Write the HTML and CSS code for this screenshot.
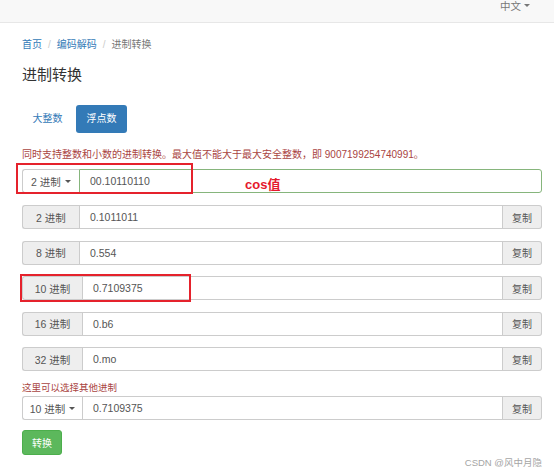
FILE: index.html
```html
<!DOCTYPE html>
<html lang="zh">
<head>
<meta charset="utf-8">
<title>进制转换</title>
<link rel="stylesheet" href="styles.css">
</head>
<body>
<div class="navbar">
  <span class="lang">中文<span class="caret"></span></span>
</div>
<div class="container">
  <div class="breadcrumb">
    <a href="#">首页</a><span class="sep">/</span><a href="#">编码解码</a><span class="sep">/</span><span class="active">进制转换</span>
  </div>
  <h3 class="title">进制转换</h3>
  <div class="pills">
    <a class="pill" href="#">大整数</a>
    <a class="pill active" href="#">浮点数</a>
  </div>
  <p class="help">同时支持整数和小数的进制转换。最大值不能大于最大安全整数，即 9007199254740991。</p>

  <div class="group first">
    <div class="dropdown w57">2 进制<span class="caret"></span></div>
    <div class="input success">00.10110110</div>
    <span class="mark mark1"></span>
    <span class="note">cos值</span>
  </div>

  <div class="rows">
    <div class="group">
      <div class="addon w57">2 进制</div>
      <div class="input">0.1011011</div>
      <div class="copy">复制</div>
    </div>
    <div class="group">
      <div class="addon w57">8 进制</div>
      <div class="input">0.554</div>
      <div class="copy">复制</div>
    </div>
    <div class="group">
      <div class="addon w60">10 进制</div>
      <div class="input">0.7109375</div>
      <div class="copy">复制</div>
      <span class="mark mark2"></span>
    </div>
    <div class="group">
      <div class="addon w60">16 进制</div>
      <div class="input">0.b6</div>
      <div class="copy">复制</div>
    </div>
    <div class="group">
      <div class="addon w60">32 进制</div>
      <div class="input">0.mo</div>
      <div class="copy">复制</div>
    </div>
  </div>

  <p class="help small">这里可以选择其他进制</p>
  <div class="group last">
    <div class="dropdown w60">10 进制<span class="caret"></span></div>
    <div class="input">0.7109375</div>
    <div class="copy">复制</div>
  </div>

  <button class="btn-success">转换</button>
</div>
<div class="watermark">CSDN @风中月隐</div>
</body>
</html>
```

FILE: styles.css
```css
* { box-sizing: border-box; }
html, body { margin: 0; padding: 0; }
body {
  width: 554px;
  height: 476px;
  position: relative;
  overflow: hidden;
  background: #fff;
  font-family: "Liberation Sans", "Noto Sans CJK SC", sans-serif;
  font-size: 10px;
  color: #333;
}
.navbar {
  height: 23px;
  background: #f8f8f8;
  border-bottom: 1px solid #e7e7e7;
  display: flex;
  justify-content: flex-end;
  align-items: center;
  padding-right: 24px;
  padding-bottom: 12px;
}
.lang { color: #777; font-size: 10.5px; display: flex; align-items: center; }
.caret {
  display: inline-block;
  width: 0; height: 0;
  border-left: 3px solid transparent;
  border-right: 3px solid transparent;
  border-top: 3.5px solid currentColor;
  margin-left: 3px;
}
.container {
  padding-left: 22px;
  width: 542px;
  display: flex;
  flex-direction: column;
}
.breadcrumb {
  margin-top: 15px;
  line-height: 14px;
  font-size: 10px;
  color: #777;
}
.breadcrumb a { color: #337ab7; text-decoration: none; }
.breadcrumb .sep { color: #ccc; padding: 0 6px; }
.title {
  margin: 14px 0 0;
  font-size: 15px;
  line-height: 18px;
  font-weight: 400;
  color: #333;
}
.pills {
  margin-top: 21px;
  display: flex;
  gap: 3px;
}
.pill {
  display: block;
  height: 28px;
  line-height: 28px;
  padding: 0 10.5px;
  font-size: 10px;
  color: #337ab7;
  text-decoration: none;
  border-radius: 3px;
}
.pill.active { background: #337ab7; color: #fff; }
.help {
  margin: 15px 0 0;
  line-height: 14px;
  font-size: 10px;
  color: #a94442;
}
.help.small { margin-top: 11px; font-size: 9.5px; line-height: 12px; }
.group {
  position: relative;
  display: flex;
  height: 24px;
  width: 520px;
  font-size: 10.5px;
  color: #555;
}
.group.first { margin-top: 7px; }
.group.last { margin-top: 2px; }
.rows {
  margin-top: 12px;
  display: flex;
  flex-direction: column;
  gap: 11.5px;
}
.addon, .dropdown {
  flex: none;
  display: flex;
  align-items: center;
  justify-content: center;
  border: 1px solid #ccc;
  border-right: 0;
  border-radius: 3px 0 0 3px;
  background: #eee;
}
.dropdown { background: #fff; }
.dropdown .caret { margin-left: 4px; color: #555; }
.w57 { width: 57px; }
.w60 { width: 60px; }
.input {
  flex: 1;
  display: flex;
  align-items: center;
  padding-left: 10px;
  border: 1px solid #ccc;
  color: #555;
}
.input.success { border-color: #86b57c; border-radius: 0 3px 3px 0; }
.copy {
  flex: none;
  width: 39px;
  display: flex;
  align-items: center;
  justify-content: center;
  background: #eee;
  border: 1px solid #ccc;
  border-left: 0;
  border-radius: 0 3px 3px 0;
  color: #555;
  font-size: 10px;
}
.mark {
  position: absolute;
  border: 2px solid #e5222c;
  pointer-events: none;
}
.mark1 { left: -6px; top: -6px; width: 177px; height: 31px; }
.mark2 { left: -2px; top: -2px; width: 171px; height: 28px; }
.note {
  position: absolute;
  left: 223px;
  top: 8px;
  font-size: 13px;
  font-weight: 700;
  color: #e5192c;
  line-height: 16px;
}
.btn-success {
  margin-top: 10px;
  align-self: flex-start;
  height: 25px;
  padding: 0 9px;
  border: 1px solid #4cae4c;
  border-radius: 3px;
  background: #5cb85c;
  color: #fff;
  font-family: inherit;
  font-size: 10px;
}
.watermark {
  position: absolute;
  right: 12px;
  top: 457px;
  font-size: 9.5px;
  line-height: 12px;
  color: #a5a5a5;
}
```
